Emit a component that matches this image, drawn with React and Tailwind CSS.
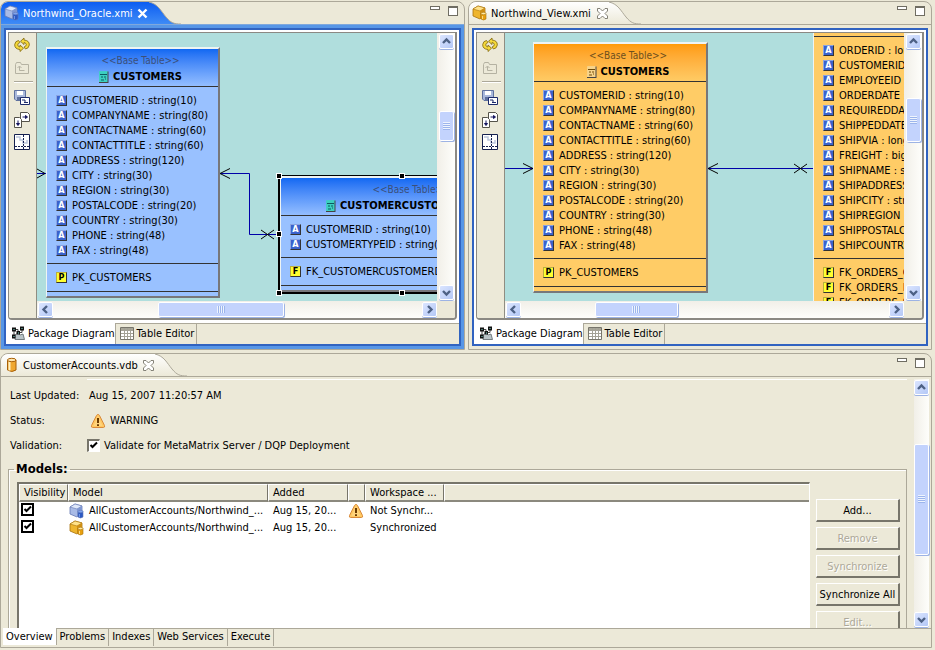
import { useState } from "react";

const CUSTOMER_COLUMNS = [
  "CUSTOMERID : string(10)",
  "COMPANYNAME : string(80)",
  "CONTACTNAME : string(60)",
  "CONTACTTITLE : string(60)",
  "ADDRESS : string(120)",
  "CITY : string(30)",
  "REGION : string(30)",
  "POSTALCODE : string(20)",
  "COUNTRY : string(30)",
  "PHONE : string(48)",
  "FAX : string(48)",
];

const ORDER_COLUMNS = [
  "ORDERID : long",
  "CUSTOMERID : string(10)",
  "EMPLOYEEID : long",
  "ORDERDATE : timestamp",
  "REQUIREDDATE : timestamp",
  "SHIPPEDDATE : timestamp",
  "SHIPVIA : long",
  "FREIGHT : bigdecimal",
  "SHIPNAME : string(80)",
  "SHIPADDRESS : string(120)",
  "SHIPCITY : string(30)",
  "SHIPREGION : string(30)",
  "SHIPPOSTALCODE : string(20)",
  "SHIPCOUNTRY : string(30)",
];

const MODELS = [
  {
    tone: "blue",
    name: "AllCustomerAccounts/Northwind_...",
    added: "Aug 15, 20...",
    warn: true,
    state: "Not Synchr...",
  },
  {
    tone: "gold",
    name: "AllCustomerAccounts/Northwind_...",
    added: "Aug 15, 20...",
    warn: false,
    state: "Synchronized",
  },
];

/* ---------- icons ---------- */

function ModelIcon({ tone }) {
  const c =
    tone === "blue"
      ? { top: "#dfe8fa", left: "#a9bbe6", right: "#7f97d2", line: "#6479b4", cyl: "#2c59c4", cylTop: "#7fa4f0" }
      : { top: "#ffe28a", left: "#eeb52e", right: "#cf8f14", line: "#a8720c", cyl: "#e8a010", cylTop: "#ffe9a0" };
  return (
    <svg className="w-4 h-4 shrink-0" viewBox="0 0 16 16" aria-hidden="true">
      <path d="M1 4l5-3 7 2v7l-5 4-7-3z" fill={c.left} stroke={c.line} strokeWidth="0.8" />
      <path d="M1 4l5-3 7 2-5 3z" fill={c.top} stroke={c.line} strokeWidth="0.6" />
      <path d="M8 6l5-3v7l-5 4z" fill={c.right} />
      <path d="M9 8.5h5v5.500q-2.500 2-5 0z" fill={c.cyl} stroke={c.line} strokeWidth="0.6" />
      <ellipse cx="11.500" cy="8.5" rx="2.500" ry="1.2" fill={c.cylTop} stroke={c.line} strokeWidth="0.6" />
      <path d="M10.5 11v3" stroke={c.cylTop} strokeWidth="0.8" />
    </svg>
  );
}

function DatabaseIcon() {
  return (
    <svg className="w-4 h-4 shrink-0" viewBox="0 0 16 16" aria-hidden="true">
      <path d="M3.5 3v10q4.500 3 8.500 0V3z" fill="#f0a830" stroke="#a86008" />
      <path d="M5.500 4v9.500" stroke="#fff0c0" strokeWidth="2" />
      <ellipse cx="7.750" cy="3" rx="4.250" ry="1.700" fill="#ffe6b0" stroke="#a86008" />
    </svg>
  );
}

function WarningIcon() {
  return (
    <svg className="w-4 h-4 shrink-0" viewBox="0 0 16 16" aria-hidden="true">
      <path
        d="M8 1.500q1 0 1.500 1l5 10q.700 2-1.200 2H2.700q-1.900 0-1.200-2l5-10q.500-1 1.500-1z"
        fill="#ffc860"
        stroke="#d98a3c"
      />
      <path d="M8 3l4.500 10h-9z" fill="#ffd98a" opacity="0.7" />
      <path d="M8 5v5" stroke="#6b3a00" strokeWidth="2" />
      <path d="M8 11.200v1.800" stroke="#6b3a00" strokeWidth="2" />
    </svg>
  );
}

function SyncIcon() {
  return (
    <svg className="w-4 h-4" viewBox="0 0 16 16" aria-hidden="true">
      <path
        d="M6 14.500V12.500Q.5 12 .7 7.500 1.200 4 4.500 3.500L6 5.500Q3.800 6 3.700 8q.300 1.700 2.300 2V8l3.500 3.200z"
        fill="#f5d93a"
        stroke="#8a7216"
        strokeWidth="0.900"
      />
      <path
        d="M10 1v2q5.500.5 5.300 5-.5 3.500-3.800 4L10 10q2.200-.5 2.300-2.500-.3-1.700-2.300-2v2L6.500 4.300z"
        fill="#f5d93a"
        stroke="#8a7216"
        strokeWidth="0.900"
      />
    </svg>
  );
}

function FolderUpIcon() {
  return (
    <svg className="w-4 h-4" viewBox="0 0 16 16" fill="none" stroke="#b5b2a2" aria-hidden="true">
      <path d="M1.500 13.500v-9l1-2h4l1 2h7v9z" />
      <path d="M5.500 10.500v-4M3.500 8l2-2 2 2M5.500 10.500h5" />
    </svg>
  );
}

function SaveImageIcon() {
  return (
    <svg className="w-4 h-4" viewBox="0 0 16 16" aria-hidden="true">
      <path d="M.5.500h11v10H2l-1.500-1.500z" fill="#aab9dc" stroke="#5f719e" />
      <path d="M3 1h6v4H3z" fill="#fff" />
      <path d="M3 7h5v3H3z" fill="#5f719e" />
      <path d="M6.500 7.500h9v7h-9z" fill="#fff" stroke="#1c2a6b" />
      <path d="M8 10h3M10 12.500h4M11 10v2" stroke="#1c2a6b" />
    </svg>
  );
}

function PagesIcon() {
  return (
    <svg className="w-4 h-4" viewBox="0 0 16 16" aria-hidden="true">
      <path d="M6.500.500h7l2 2v7h-9z" fill="#fff" stroke="#55534a" />
      <path d="M.5 5.500h5l2 2v8h-7z" fill="#fff" stroke="#55534a" />
      <path d="M4 8.500v4M2.500 11.500L4 13.500l1.500-2z" stroke="#15155e" fill="#15155e" />
      <path d="M8.500 5h4M11.500 3.500L13.500 5l-2 1.500z" stroke="#15155e" fill="#15155e" />
    </svg>
  );
}

function LayoutIcon() {
  return (
    <svg className="w-4 h-4" viewBox="0 0 16 16" aria-hidden="true">
      <path d="M.5.500h15v15H.5z" fill="#fff" stroke="#15204f" />
      <path d="M2 3h4v3h3v3h4v-3" fill="none" stroke="#bcc6dc" strokeWidth="1.500" />
      <path d="M9.500 1v14" stroke="#15204f" strokeDasharray="2 1" />
      <path d="M1 12.500h14" stroke="#15204f" strokeDasharray="2 1" />
    </svg>
  );
}

function DiagramIcon() {
  return (
    <svg className="w-[14px] h-[14px] shrink-0" viewBox="0 0 14 14" aria-hidden="true">
      <path d="M4 13.500V9l3-2 2 2 3-1 1.500 5.500z" fill="#b9c4c8" stroke="#5c6468" strokeWidth="0.800" />
      <path d="M3 3.500h4v3M11 2.500v4H7M3 3.500v6" stroke="#444" fill="none" />
      <path d="M1 1.500h4v4H1zM9 .5h4v4H9zM5.500 5h3.500v3.500H5.500zM1 8.500h3.500v4H1z" fill="#111" />
      <path d="M2.500 3h1v1h-1zM10.500 2h1v1h-1zM7 6.500h1v1H7zM2.500 10h1v1h-1z" fill="#7fe0d0" />
    </svg>
  );
}

function GridIcon() {
  return (
    <svg className="w-[14px] h-[14px] shrink-0" viewBox="0 0 14 14" aria-hidden="true">
      <path d="M.5 1.500h13v12H.5z" fill="#fff" stroke="#77756b" />
      <path d="M1 2h12v2H1z" fill="#a8a698" />
      <path d="M1 4.500h12M1 7.500h12M1 10.500h12M4.500 2v11M7.500 2v11M10.500 2v11" stroke="#a3a196" />
    </svg>
  );
}

function TableIcon({ tone }) {
  const fill = tone === "blue" ? "#3cd0c0" : "#f7d48c";
  const line = tone === "blue" ? "#0b5a60" : "#6e4a08";
  return (
    <svg className="w-[10px] h-3 shrink-0" viewBox="0 0 10 12" aria-hidden="true">
      <path d="M.5.500h8v11h-8z" fill={fill} stroke={fill} strokeWidth="0.800" />
      <path d="M9 .5v11.500M0 11.500h9" stroke="#444" />
      <path d="M1 3.500h7" stroke={line} />
      <path d="M2 6h2M5 6h2M2 9h3M6 8h1" stroke={line} />
    </svg>
  );
}

function CloseIcon({ active }) {
  return (
    <svg className="w-[11px] h-[11px]" viewBox="0 0 11 11" aria-hidden="true">
      {active ? (
        <path d="M1.500 1.500l8 8M9.500 1.500l-8 8" stroke="#fff" strokeWidth="2.400" />
      ) : (
        <path
          d="M.5.500h2.500l2.500 2.500L8 .5h2.500V3L8 5.500l2.500 2.500v2.500H8L5.500 8 3 10.500H.5V8L3 5.500.5 3z"
          fill="#fff"
          stroke="#77756a"
          strokeWidth="0.900"
        />
      )}
    </svg>
  );
}

function Chevron({ dir }) {
  const d = {
    up: "M2 7l3.500-3.500L9 7",
    down: "M2 4l3.500 3.500L9 4",
    left: "M7 2L3.500 5.500 7 9",
    right: "M4 2l3.500 3.500L4 9",
  }[dir];
  return (
    <svg className="w-[11px] h-[11px]" viewBox="0 0 11 11" aria-hidden="true">
      <path d={d} fill="none" stroke="#4d6185" strokeWidth="2.400" />
    </svg>
  );
}

/* ---------- shared widgets ---------- */

function ScrollButton({ dir }) {
  return (
    <button
      aria-label={`Scroll ${dir}`}
      className="w-[15px] h-[15px] shrink-0 flex items-center justify-center rounded-xs border border-white bg-linear-to-br from-[#dbe5ff] to-[#b4c8f6] shadow-[0_1px_0_#9db3e4]"
    >
      <Chevron dir={dir} />
    </button>
  );
}

// before / size / after are relative lengths along the track
function ScrollBar({ vertical, before, size, after }) {
  return (
    <div
      className={
        vertical
          ? "flex flex-col items-center h-full py-px bg-linear-to-r from-[#f1efe8] to-[#fefefb]"
          : "flex items-center w-full pl-px bg-linear-to-b from-[#f1efe8] to-[#fefefb]"
      }
    >
      <ScrollButton dir={vertical ? "up" : "left"} />
      <div className="basis-0" style={{ flexGrow: before }} />
      <div
        style={{ flexGrow: size }}
        className={`basis-0 flex items-center justify-center rounded-xs border border-white bg-[#c3d3fd] shadow-[1px_1px_0_#9db3e4] ${
          vertical ? "w-[15px]" : "h-[15px]"
        }`}
      >
        <div
          className={
            vertical
              ? "w-[7px] h-2 bg-[repeating-linear-gradient(to_bottom,#eef4fe_0_1px,#9cb5ec_1px_2px)]"
              : "w-2 h-[7px] bg-[repeating-linear-gradient(to_right,#eef4fe_0_1px,#9cb5ec_1px_2px)]"
          }
        />
      </div>
      <div className="basis-0" style={{ flexGrow: after }} />
      <ScrollButton dir={vertical ? "down" : "right"} />
    </div>
  );
}

function TitleBar({ icon, title, active, width }) {
  const id = active ? "tab-active" : `tab-${title.length}`;
  return (
    <div className="flex h-[22px]">
      <div
        className={`flex items-center pl-[3px] pr-px rounded-tl-md bg-linear-to-b ${width} ${
          active ? "from-[#0c5df2] to-[#3e8bf6] text-white" : "from-white to-[#ece9d8]"
        }`}
      >
        {icon}
        <span className="ml-[3px] grow whitespace-nowrap">{title}</span>
        <button aria-label={`Close ${title}`}>
          <CloseIcon active={active} />
        </button>
      </div>
      <svg className="w-8 h-[22px]" viewBox="0 0 32 22" aria-hidden="true">
        <defs>
          <linearGradient id={id} x1="0" y1="0" x2="0" y2="1">
            <stop offset="0" stopColor={active ? "#0c5df2" : "#ffffff"} />
            <stop offset="1" stopColor={active ? "#3e8bf6" : "#ece9d8"} />
          </linearGradient>
        </defs>
        <path d="M0 0C9 2 12 9 17 15S25 22 32 22H0z" fill={`url(#${id})`} />
        <path d="M0 0C9 2 12 9 17 15S25 22 32 22" fill="none" stroke="#aca899" />
      </svg>
      <div className="ml-auto mr-[6px] flex gap-2 pt-1">
        <button aria-label="Minimize" className="w-[10px] h-1 border border-[#6f6d62] bg-white" />
        <button aria-label="Maximize" className="w-[10px] h-[10px] border border-t-2 border-[#6f6d62] bg-white" />
      </div>
    </div>
  );
}

function Checkbox({ id, label, checked, onChange, flat }) {
  return (
    <span className="inline-grid">
      <input
        id={id}
        type="checkbox"
        aria-label={label}
        checked={checked}
        onChange={onChange}
        className={`[grid-area:1/1] appearance-none w-[13px] h-[13px] bg-white ${
          flat
            ? "border-2 border-black"
            : "border-t-2 border-l-2 border-r border-b border-t-[#77756a] border-l-[#77756a] border-r-white border-b-white"
        }`}
      />
      {checked && (
        <svg className="[grid-area:1/1] w-[13px] h-[13px] pointer-events-none" viewBox="0 0 13 13">
          <path d="M3.500 6l2 2 4.500-4.500" fill="none" stroke="#000" strokeWidth="2" />
        </svg>
      )}
    </span>
  );
}

/* ---------- diagrams ---------- */

function Badge({ letter }) {
  return (
    <span
      className={`w-[11px] h-[11px] shrink-0 flex items-center justify-center border text-[9px] leading-[9px] font-bold ${
        letter === "A"
          ? "bg-[#3a62cc] text-white border-t-[#8ba4e0] border-l-[#8ba4e0] border-r-[#333] border-b-[#333]"
          : "bg-[#ffff30] text-black border-t-[#b8b040] border-l-[#b8b040] border-r-[#333] border-b-[#333]"
      }`}
    >
      {letter}
    </span>
  );
}

function Rows({ items, letter }) {
  return (
    <ul>
      {items.map((item) => (
        <li key={item} className="flex items-center gap-[5px] h-[15px] pl-[9px] whitespace-nowrap">
          <Badge letter={letter} />
          {item}
        </li>
      ))}
    </ul>
  );
}

function Entity({ tone, name, columns, keys, keyLetter, className }) {
  const blue = tone === "blue";
  return (
    <div
      className={`absolute border-t-2 border-l border-r-2 border-b-2 border-t-[#eef4f4] border-l-[#eef4f4] border-r-[#77777a] border-b-[#77777a] ${
        blue ? "bg-[#99c1ff]" : "bg-[#ffcc66]"
      } ${className}`}
    >
      <div
        className={`h-[38px] pt-1 pl-4 border-b border-[#333] bg-linear-to-b ${
          blue ? "from-[#0f68f2] to-[#94beff]" : "from-[#ff9b04] to-[#ffcb64]"
        }`}
      >
        <div className={`text-center text-[10px] leading-4 ${blue ? "text-[#3c4f78]" : "text-[#6d4f1e]"}`}>
          &lt;&lt;Base Table&gt;&gt;
        </div>
        <div className="flex items-center justify-center gap-1 leading-4 font-bold">
          <TableIcon tone={tone} />
          {name}
        </div>
      </div>
      <div className="pt-[6px] pb-[5px] border-b border-[#333]">
        <Rows items={columns} letter="A" />
      </div>
      <div className="pt-[6px] pb-[6px] border-b border-[#333]">
        <Rows items={keys} letter={keyLetter} />
      </div>
      <div className="h-1" />
    </div>
  );
}

function Handle({ className }) {
  return <span className={`absolute w-[6px] h-[6px] bg-black border border-white ${className}`} />;
}

function OracleDiagram() {
  return (
    <>
      <svg className="absolute left-0 top-0 w-[260px] h-[268px]" fill="none" aria-hidden="true">
        <path d="M0 140.500h9M183 140.500h29.500v61H241" stroke="#0000a8" />
        <path d="M0 136l8 4.500-8 4.500M193 135.500l-10 5 10 5" stroke="#000" />
        <path d="M224 197l13 9M224 206l13-9" stroke="#000" />
      </svg>
      <Entity
        tone="blue"
        name="CUSTOMERS"
        columns={CUSTOMER_COLUMNS}
        keys={["PK_CUSTOMERS"]}
        keyLetter="P"
        className="left-[9px] top-[14px] w-[174px]"
      />
      <div className="absolute left-[241px] top-[142px] w-[248px] h-[119px] border-2 border-black" />
      <Entity
        tone="blue"
        name="CUSTOMERCUSTOMERDEMO"
        columns={["CUSTOMERID : string(10)", "CUSTOMERTYPEID : string(10)"]}
        keys={["FK_CUSTOMERCUSTOMERDEMO"]}
        keyLetter="F"
        className="left-[243px] top-[143px] w-[248px]"
      />
      <Handle className="left-[239px] top-[140px]" />
      <Handle className="left-[362px] top-[140px]" />
      <Handle className="left-[239px] top-[198px]" />
      <Handle className="left-[239px] top-[257px]" />
      <Handle className="left-[362px] top-[257px]" />
    </>
  );
}

function ViewDiagram() {
  return (
    <>
      <svg className="absolute left-0 top-0 w-[320px] h-[268px]" fill="none" aria-hidden="true">
        <path d="M0 135.500h29M203 135.500h105" stroke="#0000a8" />
        <path d="M18 130.500l10 5-10 5M213 130.500l-10 5 10 5" stroke="#000" />
        <path d="M289 131l13 9M289 140l13-9" stroke="#000" />
      </svg>
      <Entity
        tone="orange"
        name="CUSTOMERS"
        columns={CUSTOMER_COLUMNS}
        keys={["PK_CUSTOMERS"]}
        keyLetter="P"
        className="left-[28px] top-[9px] w-[175px]"
      />
      <Entity
        tone="orange"
        name="ORDERS"
        columns={ORDER_COLUMNS}
        keys={["FK_ORDERS_CUSTOMERS", "FK_ORDERS_EMPLOYEES", "FK_ORDERS_SHIPPERS"]}
        keyLetter="F"
        className="left-[308px] -top-[36px] w-[176px]"
      />
    </>
  );
}

function ToolBar() {
  return (
    <div className="w-7 shrink-0 border-r border-[#8f8d82] bg-[#ece9d8] flex flex-col items-start pl-[5px] pt-1">
      <button aria-label="Refresh diagram">
        <SyncIcon />
      </button>
      <button aria-label="Show parent package" className="mt-[7px]" disabled>
        <FolderUpIcon />
      </button>
      <div className="w-[19px] mt-[5px] border-t border-[#aca899] border-b border-b-white" />
      <button aria-label="Save as image" className="mt-[7px]">
        <SaveImageIcon />
      </button>
      <button aria-label="Page layout" className="mt-[6px]">
        <PagesIcon />
      </button>
      <button aria-label="Auto layout" className="mt-[6px]">
        <LayoutIcon />
      </button>
    </div>
  );
}

function DiagramEditor({ title, tone, active, tabWidth, vScroll, hScroll, children }) {
  return (
    <section className="min-w-0 flex flex-col border border-[#aca899] rounded-t-lg overflow-hidden">
      <TitleBar icon={<ModelIcon tone={tone} />} title={title} active={active} width={tabWidth} />
      <div
        className={`grow flex flex-col p-[3px] border-t ${
          active ? "bg-[#5796e6] border-[#7fa8dc]" : "border-[#aca899]"
        }`}
      >
        <div className="grow flex flex-col border-2 border-[#3163c0] bg-white">
          <div className="mx-[2px] mt-[2px] flex border-t border-l border-r-2 border-b-2 border-[#8b8983] rounded-b-sm overflow-hidden">
            <ToolBar />
            <div className="grow min-w-0 grid grid-cols-[minmax(0,1fr)_18px] grid-rows-[268px_17px] bg-[#ece9d8]">
              <div className="relative overflow-hidden bg-[#b0dedd]">{children}</div>
              <ScrollBar vertical {...vScroll} />
              <ScrollBar {...hScroll} />
            </div>
          </div>
          <div className="mt-[3px] flex grow min-h-[21px]" role="tablist">
            <button role="tab" aria-selected="true" className="flex items-center gap-[3px] pl-[5px] pb-px bg-white">
              <DiagramIcon />
              Package Diagram
            </button>
            <div className="grow flex bg-[#ece9d8] border-t border-[#aca899]">
              <button
                role="tab"
                aria-selected="false"
                className="flex items-center gap-[3px] pl-1 pr-[2px] pb-[2px] border-x border-[#aca899]"
              >
                <GridIcon />
                Table Editor
              </button>
            </div>
          </div>
        </div>
      </div>
    </section>
  );
}

/* ---------- VDB editor ---------- */

function HeadCell({ children }) {
  return (
    <th
      scope="col"
      className="h-[17px] pl-1 text-left font-normal whitespace-nowrap overflow-hidden border-t border-t-white border-r border-r-[#77756a] border-b-2 border-b-[#8b897e] border-l border-l-white last:border-r-0"
    >
      {children}
    </th>
  );
}

function ModelTable() {
  const [visible, setVisible] = useState([true, true]);

  const toggle = (index) => setVisible(visible.map((v, i) => (i === index ? !v : v)));

  return (
    <div className="grow min-w-0 bg-white border-t-2 border-l-2 border-r border-t-[#77756a] border-l-[#77756a] border-r-white">
      <table className="w-full table-fixed border-separate border-spacing-0">
        <colgroup>
          <col className="w-[49px]" />
          <col className="w-[200px]" />
          <col className="w-[80px]" />
          <col className="w-[17px]" />
          <col className="w-[79px]" />
          <col />
        </colgroup>
        <thead className="bg-[#ece9d8]">
          <tr>
            <HeadCell>Visibility</HeadCell>
            <HeadCell>Model</HeadCell>
            <HeadCell>Added</HeadCell>
            <HeadCell />
            <HeadCell>Workspace ...</HeadCell>
            <HeadCell />
          </tr>
        </thead>
        <tbody>
          {MODELS.map((model, index) => (
            <tr key={model.tone} className="h-[17px] whitespace-nowrap">
              <td className="p-0 pl-[2px] leading-none">
                <Checkbox
                  flat
                  label={`Visibility of ${model.tone} model`}
                  checked={visible[index]}
                  onChange={() => toggle(index)}
                />
              </td>
              <td className="p-0 pl-px">
                <div className="flex items-center gap-1">
                  <ModelIcon tone={model.tone} />
                  {model.name}
                </div>
              </td>
              <td className="p-0 pl-[5px]">{model.added}</td>
              <td className="p-0">{model.warn && <WarningIcon />}</td>
              <td className="p-0 pl-[5px]">{model.state}</td>
              <td className="p-0" />
            </tr>
          ))}
        </tbody>
      </table>
    </div>
  );
}

function PushButton({ children, disabled }) {
  return (
    <button
      disabled={disabled}
      className="h-[23px] shrink-0 border-t border-l border-r-2 border-b-2 border-t-white border-l-white border-r-[#77756a] border-b-[#77756a] whitespace-nowrap disabled:text-[#aca899] disabled:[text-shadow:1px_1px_0_#fff]"
    >
      {children}
    </button>
  );
}

function VdbEditor() {
  const [validate, setValidate] = useState(true);

  return (
    <section className="grow min-h-0 flex flex-col border border-[#aca899] rounded-t-lg overflow-hidden">
      <TitleBar icon={<DatabaseIcon />} title="CustomerAccounts.vdb" width="w-[154px]" />
      <div className="grow min-h-0 flex border-t border-[#aca899] pt-[2px]">
        <div className="grow min-w-0 flex flex-col overflow-hidden pl-[7px] pr-[7px]">
          <div className="ml-[79px] border-t border-white" />
          <dl className="grid grid-cols-[77px_1fr] pt-[3px] pl-[2px] [&>*]:flex [&>*]:items-center">
            <dt className="h-[25px]">Last Updated:</dt>
            <dd className="pl-[2px]">Aug 15, 2007 11:20:57 AM</dd>
            <dt className="h-[25px]">Status:</dt>
            <dd className="gap-1 pl-[3px]">
              <WarningIcon />
              WARNING
            </dd>
            <dt className="h-[25px]">Validation:</dt>
            <dd className="gap-1">
              <Checkbox id="validate" checked={validate} onChange={() => setValidate(!validate)} />
              <label htmlFor="validate">Validate for MetaMatrix Server / DQP Deployment</label>
            </dd>
          </dl>
          <fieldset className="grow min-h-0 mt-[3px] min-w-0 border border-b-0 border-[#aca899] pl-2 pr-[6px] shadow-[inset_1px_1px_0_#fff]">
            <legend className="px-[2px] -ml-[3px] text-[13px] leading-4 font-bold">Models:</legend>
            <div className="flex h-full pt-[5px]">
              <ModelTable />
              <div className="w-[84px] shrink-0 ml-[6px] flex flex-col gap-[5px] pt-[17px]">
                <PushButton>Add...</PushButton>
                <PushButton disabled>Remove</PushButton>
                <PushButton disabled>Synchronize</PushButton>
                <PushButton>Synchronize All</PushButton>
                <PushButton disabled>Edit...</PushButton>
              </div>
            </div>
          </fieldset>
        </div>
        <div className="w-[17px] mr-[2px]">
          <ScrollBar vertical before={49} size={110} after={57} />
        </div>
      </div>
      <div className="flex h-5 pl-[2px]" role="tablist">
        <button role="tab" aria-selected="true" className="h-[17px] px-[3px] bg-white border-r border-[#aca899]">
          Overview
        </button>
        <div className="grow flex border-t border-[#aca899]">
          {["Problems", "Indexes", "Web Services", "Execute"].map((tab) => (
            <button
              key={tab}
              role="tab"
              aria-selected="false"
              className="h-[17px] px-[3px] pb-px border-r border-[#aca899]"
            >
              {tab}
            </button>
          ))}
        </div>
      </div>
    </section>
  );
}

export default function App() {
  return (
    <main className="h-screen flex flex-col gap-[3px] pt-px pb-[2px] pr-[3px] bg-[#ece9d8] text-black text-[11px] leading-[15px] font-['DejaVu_Sans_Condensed','DejaVu_Sans',Tahoma,sans-serif]">
      <div className="grid grid-cols-[465fr_464fr] gap-[3px] shrink-0">
        <DiagramEditor
          title="Northwind_Oracle.xmi"
          tone="blue"
          active
          tabWidth="w-[148px]"
          vScroll={{ before: 63, size: 28, after: 145 }}
          hScroll={{ before: 105, size: 125, after: 138 }}
        >
          <OracleDiagram />
        </DiagramEditor>
        <DiagramEditor
          title="Northwind_View.xmi"
          tone="gold"
          tabWidth="w-[140px]"
          vScroll={{ before: 49, size: 43, after: 144 }}
          hScroll={{ before: 74, size: 81, after: 212 }}
        >
          <ViewDiagram />
        </DiagramEditor>
      </div>
      <VdbEditor />
    </main>
  );
}
